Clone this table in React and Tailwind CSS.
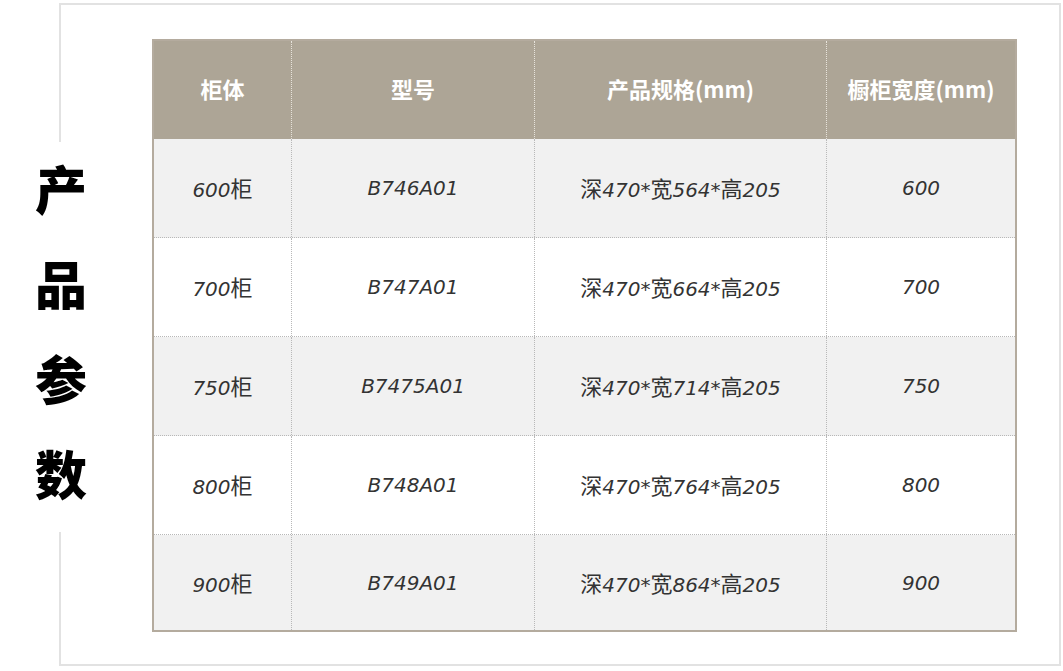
import React from 'react';

const rows = [
  { cab: '600', model: 'B746A01', spec: ['470', '564', '205'], width: '600' },
  { cab: '700', model: 'B747A01', spec: ['470', '664', '205'], width: '700' },
  { cab: '750', model: 'B7475A01', spec: ['470', '714', '205'], width: '750' },
  { cab: '800', model: 'B748A01', spec: ['470', '764', '205'], width: '800' },
  { cab: '900', model: 'B749A01', spec: ['470', '864', '205'], width: '900' },
];

const Han = ({ children }) => (
  <span className="font-['Noto_Sans_CJK_SC',sans-serif] text-[22px] not-italic">{children}</span>
);

const cell = 'flex items-center justify-center border-l border-dotted border-[#b8b8b8]';
const head = 'flex items-center justify-center pb-[4px] border-l border-dotted border-[#e8e4dc]';

export default function App() {
  return (
    <div className="w-[1063px] h-[671px] bg-white pt-[3px] pl-[59px] font-['DejaVu_Sans','Noto_Sans_CJK_SC',sans-serif]">
      <div className="relative w-[1002px] h-[663px] border-2 border-[#e2e2e2] pt-[34px] pl-[91px]">
        <div className="absolute left-[-32px] top-[137px] w-[64px] h-[390px] pb-[14px] bg-white flex flex-col items-center justify-center text-[52px] font-black text-black leading-[95px] font-['Noto_Sans_CJK_SC',sans-serif]">
          <span>产</span>
          <span>品</span>
          <span>参</span>
          <span>数</span>
        </div>

        <div className="w-[865px] border-2 border-[#b4ab9e]">
          <div className="grid grid-cols-[137px_243px_292px_1fr] h-[98px] bg-[#ada596] text-white font-bold text-[22px] font-['Noto_Sans_CJK_SC',sans-serif]">
            <div className="flex items-center justify-center pb-[4px]">柜体</div>
            <div className={head}>型号</div>
            <div className={head}>产品规格(mm)</div>
            <div className={head}>橱柜宽度(mm)</div>
          </div>
          {rows.map((r, i) => (
            <div
              key={r.model}
              className={`grid grid-cols-[137px_243px_292px_1fr] text-[20px] text-[#333333] italic ${i % 2 === 0 ? 'bg-[#f1f1f1]' : 'bg-white'} ${i < rows.length - 1 ? 'border-b border-dotted border-[#b8b8b8] h-[99px]' : 'h-[95px]'}`}
            >
              <div className="flex items-center justify-center">
                <span>{r.cab}<Han>柜</Han></span>
              </div>
              <div className={cell}>{r.model}</div>
              <div className={cell}>
                <span>
                  <Han>深</Han>{r.spec[0]}*<Han>宽</Han>{r.spec[1]}*<Han>高</Han>{r.spec[2]}
                </span>
              </div>
              <div className={cell}>{r.width}</div>
            </div>
          ))}
        </div>
      </div>
    </div>
  );
}
